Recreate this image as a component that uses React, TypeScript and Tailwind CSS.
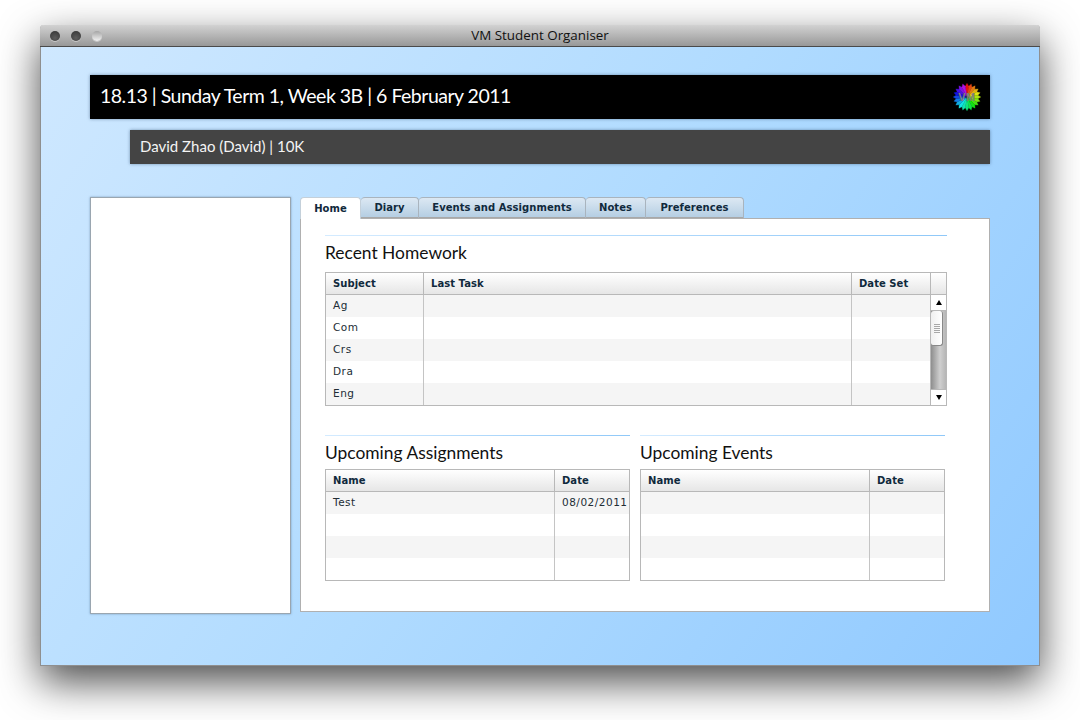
import React from "react";

const sans = "font-['Lato','Open_Sans',sans-serif]";

const Light = ({ on }: { on: boolean }) => (
  <div
    className={
      on
        ? "w-[10px] h-[10px] rounded-full bg-[radial-gradient(circle_at_50%_70%,#5c5c5c,#333333)] shadow-[0_1px_0_rgba(255,255,255,0.4)]"
        : "w-[10px] h-[10px] rounded-full bg-[linear-gradient(180deg,#a5a5a5,#f2f2f2)] shadow-[0_1px_0_rgba(255,255,255,0.4)]"
    }
  />
);

// rainbow cog in the top bar
const Logo = () => {
  const teeth = 20;
  const wedges = [];
  for (let i = 0; i < teeth; i++) {
    const a0 = ((i - 0.5) / teeth) * Math.PI * 2 - Math.PI / 2;
    const a1 = ((i + 0.5) / teeth) * Math.PI * 2 - Math.PI / 2;
    const mid = (i / teeth) * Math.PI * 2 - Math.PI / 2;
    const p = (r: number, a: number) => `${(14 + r * Math.cos(a)).toFixed(2)},${(14 + r * Math.sin(a)).toFixed(2)}`;
    const fill = `hsl(${(i / teeth) * 300}, 85%, 48%)`;
    wedges.push(
      <polygon key={i} points={`14,14 ${p(11, a0)} ${p(13.8, mid)} ${p(11, a1)}`} fill={fill} stroke={fill} strokeWidth="0.3" />
    );
  }
  return (
    <svg width="28" height="28" viewBox="0 0 28 28">
      {wedges}
      <circle cx="14" cy="14" r="1.6" fill="#222222" />
      <text x="14" y="18" textAnchor="middle" fontSize="11" letterSpacing="0.5" fontWeight="700" fill="#7c7c7c" fontFamily="'Liberation Sans', sans-serif">
        VM
      </text>
    </svg>
  );
};

const Th = ({ w, label, last }: { w: string; label?: string; last?: boolean }) => (
  <div className={`${w} h-full flex items-center pl-[7px] text-[10px] tracking-[0.05px] font-bold text-[#10293c] ${last ? "" : "border-r border-[#b8b8b8]"}`}>
    {label}
  </div>
);

const Td = ({ w, label, last }: { w: string; label?: string; last?: boolean }) => (
  <div className={`${w} h-full flex items-center pl-[7px] text-[10.5px] tracking-[0.5px] text-[#222d35] whitespace-nowrap ${last ? "" : "border-r border-[#c4c4c4]"}`}>
    {label}
  </div>
);

const Heading = ({ h, children }: { h: string; children: React.ReactNode }) => (
  <h2 className={`${sans} ${h} flex items-center text-[17.4px] text-[#111111]`}>{children}</h2>
);

const Rule = () => <div className="h-px bg-[linear-gradient(90deg,#d4ebff,#8fc8f8)]" />;

const Scrollbar = () => (
  <div className="w-[16px] h-[110px] flex flex-col border-l border-[#b8b8b8]">
    <div className="h-[16px] bg-white flex items-center justify-center border-b border-[#b8b8b8]">
      <div className="w-0 h-0 border-x-[3.5px] border-x-transparent border-b-[5px] border-b-black" />
    </div>
    <div className="flex-1 pr-[3px] bg-[linear-gradient(90deg,#8e8e8e,#cfcfcf_60%,#b5b5b5)]">
      <div className="h-[35px] bg-[linear-gradient(90deg,#f0f0f0,#ffffff)] rounded-[3px] border-r border-b border-[#888888] flex flex-col items-center justify-center gap-px">
        <div className="w-[6px] h-px bg-[#a8a8a8]" />
        <div className="w-[6px] h-px bg-[#a8a8a8]" />
        <div className="w-[6px] h-px bg-[#a8a8a8]" />
        <div className="w-[6px] h-px bg-[#a8a8a8]" />
        <div className="w-[6px] h-px bg-[#a8a8a8]" />
      </div>
    </div>
    <div className="h-[16px] bg-white flex items-center justify-center border-t border-[#b8b8b8]">
      <div className="w-0 h-0 border-x-[3.5px] border-x-transparent border-t-[5px] border-t-black" />
    </div>
  </div>
);

const homework = ["Ag", "Com", "Crs", "Dra", "Eng"];

const RecentTable = () => (
  <div className="w-[622px] border border-[#b8b8b8] font-['DejaVu_Sans',sans-serif]">
    <div className="h-[22px] flex border-b border-[#b8b8b8] bg-[linear-gradient(180deg,#ffffff,#e6e6e6)]">
      <Th w="w-[98px]" label="Subject" />
      <Th w="w-[428px]" label="Last Task" />
      <Th w="w-[79px]" label="Date Set" />
      <div className="flex-1" />
    </div>
    <div className="flex">
      <div className="flex-1">
        {homework.map((s, i) => (
          <div key={s} className={`h-[22px] flex ${i % 2 === 0 ? "bg-[#f5f5f5]" : "bg-white"}`}>
            <Td w="w-[98px]" label={s} />
            <Td w="w-[428px]" />
            <Td w="w-[78px]" last />
          </div>
        ))}
      </div>
      <Scrollbar />
    </div>
  </div>
);

const SmallTable = ({ rows }: { rows: { name: string; date: string }[] }) => (
  <div className="border border-[#b8b8b8] font-['DejaVu_Sans',sans-serif]">
    <div className="h-[22px] flex border-b border-[#b8b8b8] bg-[linear-gradient(180deg,#ffffff,#e6e6e6)]">
      <Th w="w-[229px]" label="Name" />
      <Th w="flex-1" label="Date" last />
    </div>
    {rows.map((r, i) => (
      <div key={i} className={`h-[22px] flex ${i % 2 === 0 ? "bg-[#f5f5f5]" : "bg-white"}`}>
        <Td w="w-[229px]" label={r.name} />
        <Td w="flex-1" label={r.date} last />
      </div>
    ))}
  </div>
);

const tabs = [
  { label: "Diary", w: "w-[58px]" },
  { label: "Events and Assignments", w: "w-[167px]" },
  { label: "Notes", w: "w-[60px]" },
  { label: "Preferences", w: "w-[98px]" },
];

const Tabs = () => (
  <div className="h-[22px] flex font-['DejaVu_Sans',sans-serif] text-[10px] tracking-[0.05px] font-bold text-[#10293c] relative z-10">
    <div className="h-[22px] w-[61px] flex items-center justify-center bg-white rounded-t-[4px] border-t border-x border-[#c4d0da]">
      Home
    </div>
    {tabs.map((t) => (
      <div
        key={t.label}
        className={`${t.w} h-[21px] pb-px flex items-center justify-center bg-[linear-gradient(180deg,#dce8f3,#b3cde2)] rounded-t-[4px] border-t border-r border-[#a9b4be] shadow-[inset_0_-1px_0_#a8a8a8]`}
      >
        {t.label}
      </div>
    ))}
  </div>
);

export default function App() {
  return (
    <div className="w-[1080px] h-[720px] bg-white pt-[25px] pl-[40px] overflow-hidden">
      <div className="w-[1000px] h-[641px] flex flex-col rounded-t-[4px] border-x border-b border-[#8f8f8f] shadow-[0_16px_40px_rgba(0,0,0,0.7)]">
        <div className="h-[22px] shrink-0 -mx-px relative flex items-center justify-center rounded-t-[4px] border-b border-[#4a4a4a] bg-[linear-gradient(180deg,#d2d2d2,#989898)]">
          <div className="absolute left-[10px] top-[6px] flex gap-[11px]">
            <Light on />
            <Light on />
            <Light on={false} />
          </div>
          <span className="text-[13.4px] text-[#111111] font-['Open_Sans',sans-serif]">VM Student Organiser</span>
        </div>

        <div className="flex-1 px-[49px] pt-[28px] bg-[linear-gradient(125deg,#cfe8ff_0%,#b0dbff_50%,#90c9ff_100%)]">
          <div className={`${sans} h-[44px] flex items-center justify-between pl-[10px] pr-[9px] bg-black text-white text-[19.5px] tracking-[-0.5px] shadow-[0_0_3px_rgba(60,90,120,0.6)]`}>
            <span className="pb-[3px]">18.13 | Sunday Term 1, Week 3B | 6 February 2011</span>
            <Logo />
          </div>
          <div className={`${sans} h-[34px] ml-[40px] mt-[11px] flex items-center pl-[10px] pb-px bg-[#444444] text-[#f4f4f4] text-[15px] shadow-[0_0_3px_rgba(60,90,120,0.6)]`}>
            David Zhao (David) | 10K
          </div>

          <div className="mt-[33px] flex gap-[9px]">
            <div className="w-[201px] h-[417px] bg-white border border-[#9aa6b0] shadow-[0_0_2px_rgba(60,90,120,0.5)]" />
            <div className="w-[690px]">
              <Tabs />
              <div className="h-[394px] -mt-px bg-white border border-[#b0b0b0] px-[24px] pt-[16px]">
                <div className="w-[622px]">
                  <Rule />
                  <Heading h="h-[36px] pb-px">Recent Homework</Heading>
                  <RecentTable />
                </div>
                <div className="mt-[29px] flex gap-[10px]">
                  <div className="w-[305px]">
                    <Rule />
                    <Heading h="h-[33px] pt-px">Upcoming Assignments</Heading>
                    <SmallTable
                      rows={[
                        { name: "Test", date: "08/02/2011" },
                        { name: "", date: "" },
                        { name: "", date: "" },
                        { name: "", date: "" },
                      ]}
                    />
                  </div>
                  <div className="w-[305px]">
                    <Rule />
                    <Heading h="h-[33px] pt-px">Upcoming Events</Heading>
                    <SmallTable
                      rows={[
                        { name: "", date: "" },
                        { name: "", date: "" },
                        { name: "", date: "" },
                        { name: "", date: "" },
                      ]}
                    />
                  </div>
                </div>
              </div>
            </div>
          </div>
        </div>
      </div>
    </div>
  );
}
